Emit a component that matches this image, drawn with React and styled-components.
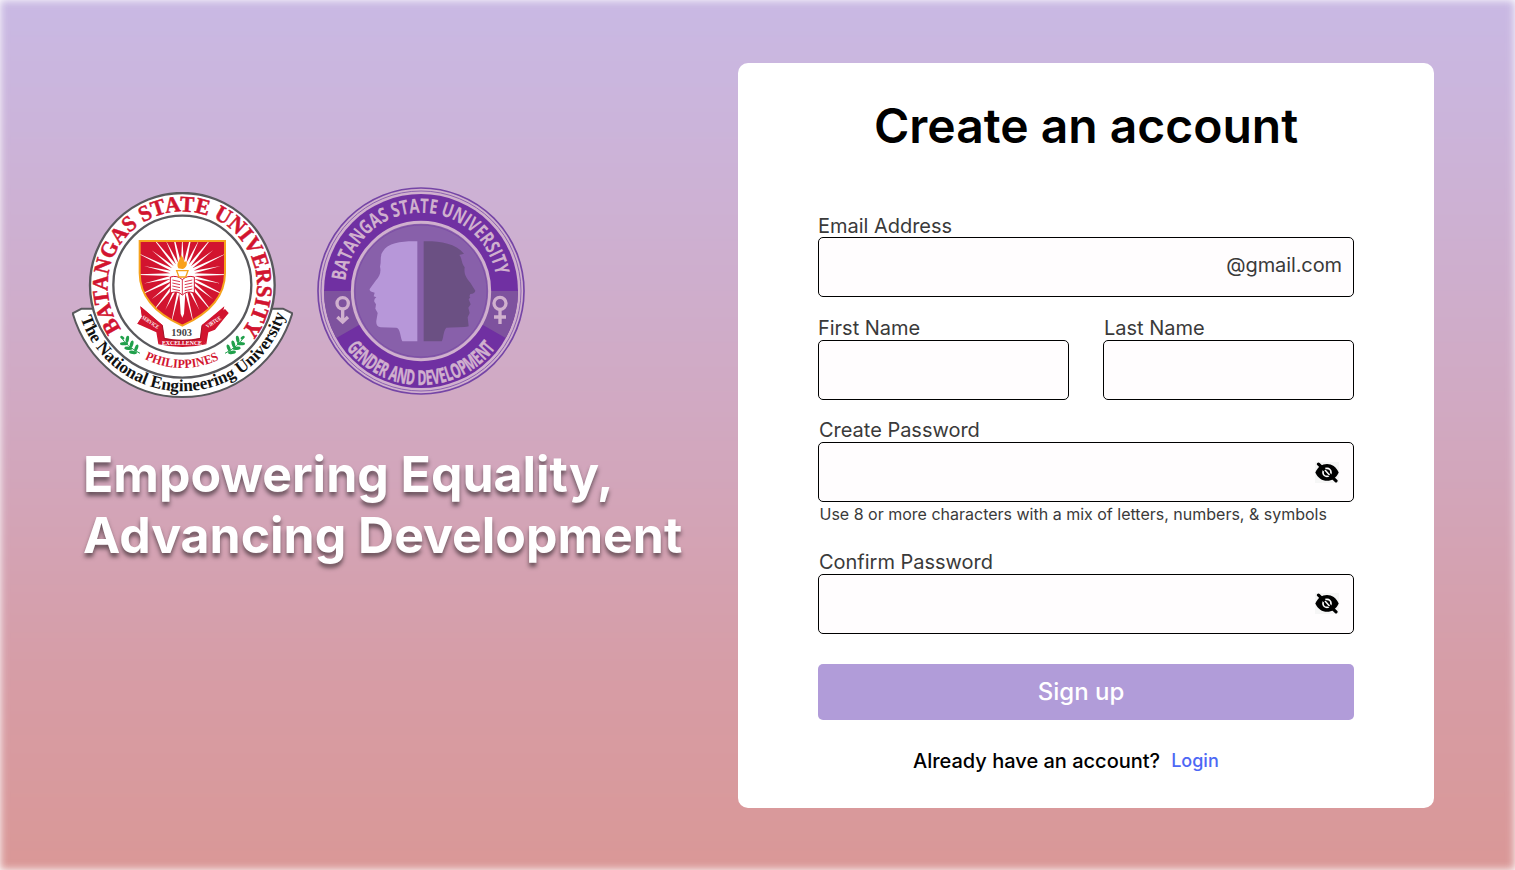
import React from "react";
import styled, { createGlobalStyle } from "styled-components";

const GlobalStyle = createGlobalStyle`
  *, *::before, *::after { box-sizing: border-box; }
  body { margin: 0; background: #fff; font-family: Inter, "Liberation Sans", sans-serif; }
`;

const Page = styled.main`
  position: relative;
  isolation: isolate;
  overflow: hidden;
  width: 1515px;
  height: 870px;
  display: flex;
  align-items: flex-start;
`;

const Backdrop = styled.div`
  position: absolute;
  inset: 0;
  z-index: -1;
  background: linear-gradient(180deg, #c9b9e4 0%, #cbb5dc 12%, #d1a9c2 47%, #d79ca4 80%, #da9897 100%);
  filter: blur(4px);
`;

const Hero = styled.section`
  width: 738px;
  padding: 187px 0 0 72px;
`;

const Seals = styled.div`
  display: flex;
  align-items: flex-start;
  gap: 24px;
  height: 210px;
`;

const UniversitySeal = styled.svg`
  display: block;
  width: 221px;
  height: 206px;
  margin-top: 5px;
`;

const GadSeal = styled.svg`
  display: block;
  width: 208px;
  height: 208px;
`;

const Tagline = styled.h2`
  margin: 47px 0 0 11px;
  font-size: 50px;
  line-height: 61px;
  font-weight: 700;
  letter-spacing: -0.03px;
  color: #fff;
  text-shadow: 0 4px 4px rgba(0, 0, 0, 0.5);
  white-space: nowrap;
`;

const Card = styled.form`
  width: 696px;
  height: 745px;
  margin-top: 63px;
  padding: 34px 80px 0;
  border-radius: 10px;
  background: #fff;
  display: flex;
  flex-direction: column;
`;

const Title = styled.h1`
  margin: 0 0 54px;
  font-size: 48px;
  line-height: 58px;
  font-weight: 600;
  text-align: center;
  white-space: nowrap;
  color: #000;
`;

const Field = styled.div`
  display: flex;
  flex-direction: column;
  flex: ${(p) => (p.$grow ? 1 : "none")};
  margin-bottom: ${(p) => p.$gap ?? 0}px;
`;

const Label = styled.label`
  height: 28px;
  padding-left: ${(p) => p.$indent ?? 0}px;
  line-height: ${(p) => p.$line ?? 32}px;
  font-size: 20px;
  color: #3a3a3a;
  letter-spacing: -0.02px;
  white-space: nowrap;
`;

const InputBox = styled.div`
  height: 60px;
  padding: 0 11px 0 15px;
  display: flex;
  align-items: center;
  justify-content: flex-end;
  border: 1px solid #000;
  border-radius: 5px;
  background: #fffdfe;
`;

const Suffix = styled.span`
  font-size: 20px;
  line-height: 24px;
  letter-spacing: -0.1px;
  padding-bottom: 5px;
  color: #3a3a3a;
`;

const Row = styled.div`
  display: flex;
  gap: 34px;
`;

const EyeIcon = styled.svg`
  width: 24px;
  height: 22px;
  margin: ${(p) => p.$top ?? 0}px 3px 0 0;
`;

const Hint = styled.p`
  margin: 0;
  padding-left: 1.5px;
  height: 44px;
  font-size: 16px;
  line-height: 25px;
  color: #3a3a3a;
  white-space: nowrap;
`;

const SubmitButton = styled.button`
  height: 56px;
  flex: none;
  border: 0;
  border-radius: 5px;
  padding: 0 10px 0 0;
  background: #b19cd9;
  color: #fff;
  font: 500 24px/56px Inter, sans-serif;
  text-align: center;
`;

const Footer = styled.p`
  margin: 29px 0 0 95px;
  display: flex;
  align-items: center;
  gap: 11px;
  font-size: 20px;
  line-height: 24px;
  font-weight: 500;
  color: #000;
  white-space: nowrap;
`;

const LoginLink = styled.a`
  font-size: 18px;
  line-height: 24px;
  color: #4d68f5;
`;

function HiddenEye({ top }) {
  return (
    <EyeIcon $top={top} viewBox="0 0 24 22" aria-label="Show password">
      <rect width="24" height="21" fill="#f6f6f6" />
      <path d="M.3 10.400C3 4.800 7 2 12 2S21 4.800 23.700 10.400C21 16 17 18.800 12 18.800S3 16 .3 10.400Z" fill="#000" />
      <circle cx="12" cy="10.400" r="4" fill="none" stroke="#fff" strokeWidth="1.700" />
      <path d="M3.500 2.200 21 18.800" stroke="#000" strokeWidth="3.200" strokeLinecap="round" />
      <path d="M10 8.100 14.500 13.100" stroke="#fff" strokeWidth="1.500" />
    </EyeIcon>
  );
}

const RAYS = Array.from({ length: 28 }, (_, i) => {
  const a = (i / 28) * Math.PI * 2;
  const r = i % 2 ? 118 : 160;
  const w = 0.065;
  const pt = (rad, ang) => `${(352 + rad * Math.cos(ang)).toFixed(1)},${(285 + rad * Math.sin(ang)).toFixed(1)}`;
  return `${pt(36, a - w * 1.8)} ${pt(r, a)} ${pt(36, a + w * 1.8)}`;
});

const SHIELD = "M224 184H480V280C480 355 425 405 352 438C279 405 224 355 224 280Z";

function Laurel({ transform }) {
  return (
    <g transform={transform} fill="#20a04b">
      <path d="M168 472Q185 500 225 521" fill="none" stroke="#20a04b" strokeWidth="3" />
      {[[177, 486, 10], [190, 500, 15], [204, 512, 20]].map(([x, y, r]) => (
        <g key={x}>
          <ellipse cx={x + 10} cy={y - 7} rx="5" ry="11" transform={`rotate(${r} ${x + 10} ${y - 7})`} />
          <ellipse cx={x} cy={y + 6} rx="12" ry="5" transform={`rotate(${r - 10} ${x} ${y + 6})`} />
        </g>
      ))}
      <ellipse cx="172" cy="474" rx="7" ry="4" transform="rotate(35 172 474)" />
    </g>
  );
}

function BatStateSeal() {
  return (
    <UniversitySeal viewBox="21 37 663 618" role="img">
      <defs>
        <clipPath id="shield"><path d={SHIELD} /></clipPath>
        <path id="uniTop" d="M170 450A224 224 0 1 1 534 450" />
        <path id="uniPhil" d="M228 532A250 250 0 0 0 476 532" />
        <path id="uniNat" d="M46 413A322 322 0 0 0 658 413" />
      </defs>
      <path d="M50 387 23 401C65 545 195 652 352 652S639 545 682 401L654 387Z" fill="#fff" stroke="#58585c" strokeWidth="6" />
      <circle cx="352" cy="317" r="277" fill="#fff" stroke="#58585c" strokeWidth="7" />
      <circle cx="352" cy="315" r="207" fill="#fff" stroke="#58585c" strokeWidth="7" />
      <g fontFamily="Liberation Serif, serif" fontWeight="700">
        <text fill="#d2142f" fontSize="67" stroke="#d2142f" strokeWidth="1.500">
          <textPath href="#uniTop" startOffset="2" textLength="988" lengthAdjust="spacingAndGlyphs">BATANGAS STATE UNIVERSITY</textPath>
        </text>
        <text fill="#d2142f" fontSize="38">
          <textPath href="#uniPhil" startOffset="12" textLength="232" lengthAdjust="spacingAndGlyphs">PHILIPPINES</textPath>
        </text>
        <text fill="#111" fontSize="52">
          <textPath href="#uniNat" startOffset="2" textLength="815" lengthAdjust="spacingAndGlyphs">The National Engineering University</textPath>
        </text>
      </g>
      <path d={SHIELD} fill="#d2142f" />
      <g clipPath="url(#shield)" fill="#fff">
        {RAYS.map((points) => <polygon key={points} points={points} />)}
      </g>
      <path d={SHIELD} fill="none" stroke="#f6a21c" strokeWidth="6" />
      <circle cx="352" cy="285" r="38" fill="#fff" />
      <path d="M343 340H361L357 402 352 414 347 402Z" fill="#fff" />
      <path d="M316 292Q337 286 352 300Q367 286 388 292V340Q366 332 352 346Q338 332 316 340Z" fill="#fff" stroke="#d2142f" strokeWidth="3" />
      <path d="M352 300V345M322 301 345 306M322 310 345 315M322 319 345 324M322 328 345 333M382 301 359 306M382 310 359 315M382 319 359 324M382 328 359 333" fill="none" stroke="#d2142f" strokeWidth="2.500" />
      <path d="M335 273H369L362 292H342Z" fill="#fff" stroke="#f6a21c" strokeWidth="4" />
      <path d="M340 266C332 250 345 242 348 226C357 235 355 242 360 248L363 243C370 254 362 266 352 268Z" fill="#f9a01b" />
      <path d="M226 380 292 436 298 476 280 494 274 458 217 432 231 411ZM478 380 411 436 406 476 424 494 430 458 491 400 471 411Z" fill="#d2142f" />
      <path d="M226 380 292 436 294 452 217 432 231 411ZM480 388 411 436 414 464 450 450 491 400Z" fill="#d2142f" />
      <path d="M280 494 296 474Q352 486 408 474L424 494Q352 510 280 494Z" fill="#d2142f" />
      <path d="M292 437 298 477Q352 490 406 477L411 437" fill="none" stroke="#a01226" strokeWidth="3" />
      <g fontFamily="Liberation Serif, serif" fontWeight="700" textAnchor="middle">
        <text x="350" y="470" fontSize="31" fill="#444" textLength="62" lengthAdjust="spacingAndGlyphs">1903</text>
        <text x="351" y="496" fontSize="20" fill="#fff" textLength="120" lengthAdjust="spacingAndGlyphs">EXCELLENCE</text>
        <text x="256" y="433" fontSize="17" fill="#fff" transform="rotate(34 256 428)" textLength="58" lengthAdjust="spacingAndGlyphs">SERVICE</text>
        <text x="446" y="433" fontSize="17" fill="#fff" transform="rotate(-33 446 428)" textLength="50" lengthAdjust="spacingAndGlyphs">VIRTUE</text>
      </g>
      <Laurel />
      <Laurel transform="matrix(-1 0 0 1 705 0)" />
    </UniversitySeal>
  );
}

function GenderSeal() {
  return (
    <GadSeal viewBox="20 19 624 624" role="img">
      <defs>
        <path id="gadTop" d="M105 303A228 228 0 0 1 559 303" />
        <path id="gadBottom" d="M107 501A282 282 0 0 0 557 501" />
      </defs>
      <circle cx="332" cy="331" r="309" fill="#d0b0ce" stroke="#7545a6" strokeWidth="5" />
      <circle cx="332" cy="331" r="300" fill="none" stroke="#8c62b0" strokeWidth="3" />
      <circle cx="332" cy="331" r="291" fill="#7030a2" />
      <path d="M41 331H130L150 431 78 472Q41 406 41 331ZM623 331H534L514 431 586 472Q623 406 623 331Z" fill="#7e529e" />
      <circle cx="332" cy="331" r="206" fill="#8860aa" stroke="#d0b0ce" strokeWidth="9" />
      <circle cx="332" cy="331" r="198" fill="none" stroke="#7d4ea6" strokeWidth="3" />
      <path d="M321 182C278 181 233 185 218 212C207 227 214 240 209 258C213 274 208 286 197 299L178 325Q176 333 193 336L190 347 198 350Q190 355 192 363L197 371 195 384 202 397 198 420Q196 438 211 440L258 441C270 443 270 470 276 482H321Z" fill="#b797d9" />
      <path d="M340 182C385 181 435 187 461 219L447 223C456 233 452 246 463 260C460 280 468 293 480 306L495 330Q494 338 480 340L477 347 480 350 475 356 481 371 474 381 478 397 472 410 475 437Q468 440 408 441C398 453 400 472 394 482H340Z" fill="#6b5083" />
      <g fontFamily="Open Sans, sans-serif" fontWeight="700" fill="#d0b0ce">
        <text fontSize="60">
          <textPath href="#gadTop" startOffset="2" textLength="652" lengthAdjust="spacingAndGlyphs">BATANGAS STATE UNIVERSITY</textPath>
        </text>
        <text fontSize="61" stroke="#d0b0ce" strokeWidth="1.500">
          <textPath href="#gadBottom" startOffset="2" textLength="516" lengthAdjust="spacingAndGlyphs">GENDER AND DEVELOPMENT</textPath>
        </text>
      </g>
      <g fill="none" stroke="#d0b0ce" strokeWidth="10">
        <circle cx="97" cy="368" r="17" />
        <path d="M97 385V422M81 409 97 424 113 409" />
        <circle cx="569" cy="368" r="18" />
        <path d="M569 386V430M551 409H587" />
      </g>
    </GadSeal>
  );
}

export default function App() {
  return (
    <>
      <GlobalStyle />
      <Page>
        <Backdrop />
        <Hero>
          <Seals>
            <BatStateSeal />
            <GenderSeal />
          </Seals>
          <Tagline>Empowering Equality,<br />Advancing Development</Tagline>
        </Hero>
        <Card>
          <Title>Create an account</Title>
          <Field $gap={15}>
            <Label $line={34}>Email Address</Label>
            <InputBox><Suffix>@gmail.com</Suffix></InputBox>
          </Field>
          <Row>
            <Field $grow $gap={14}>
              <Label>First Name</Label>
              <InputBox />
            </Field>
            <Field $grow $gap={14}>
              <Label $indent={1}>Last Name</Label>
              <InputBox />
            </Field>
          </Row>
          <Field>
            <Label $indent={1}>Create Password</Label>
            <InputBox><HiddenEye top={2} /></InputBox>
          </Field>
          <Hint>Use 8 or more characters with a mix of letters, numbers, &amp; symbols</Hint>
          <Field $gap={30}>
            <Label $indent={1}>Confirm Password</Label>
            <InputBox><HiddenEye /></InputBox>
          </Field>
          <SubmitButton type="button">Sign up</SubmitButton>
          <Footer>Already have an account? <LoginLink>Login</LoginLink></Footer>
        </Card>
      </Page>
    </>
  );
}
